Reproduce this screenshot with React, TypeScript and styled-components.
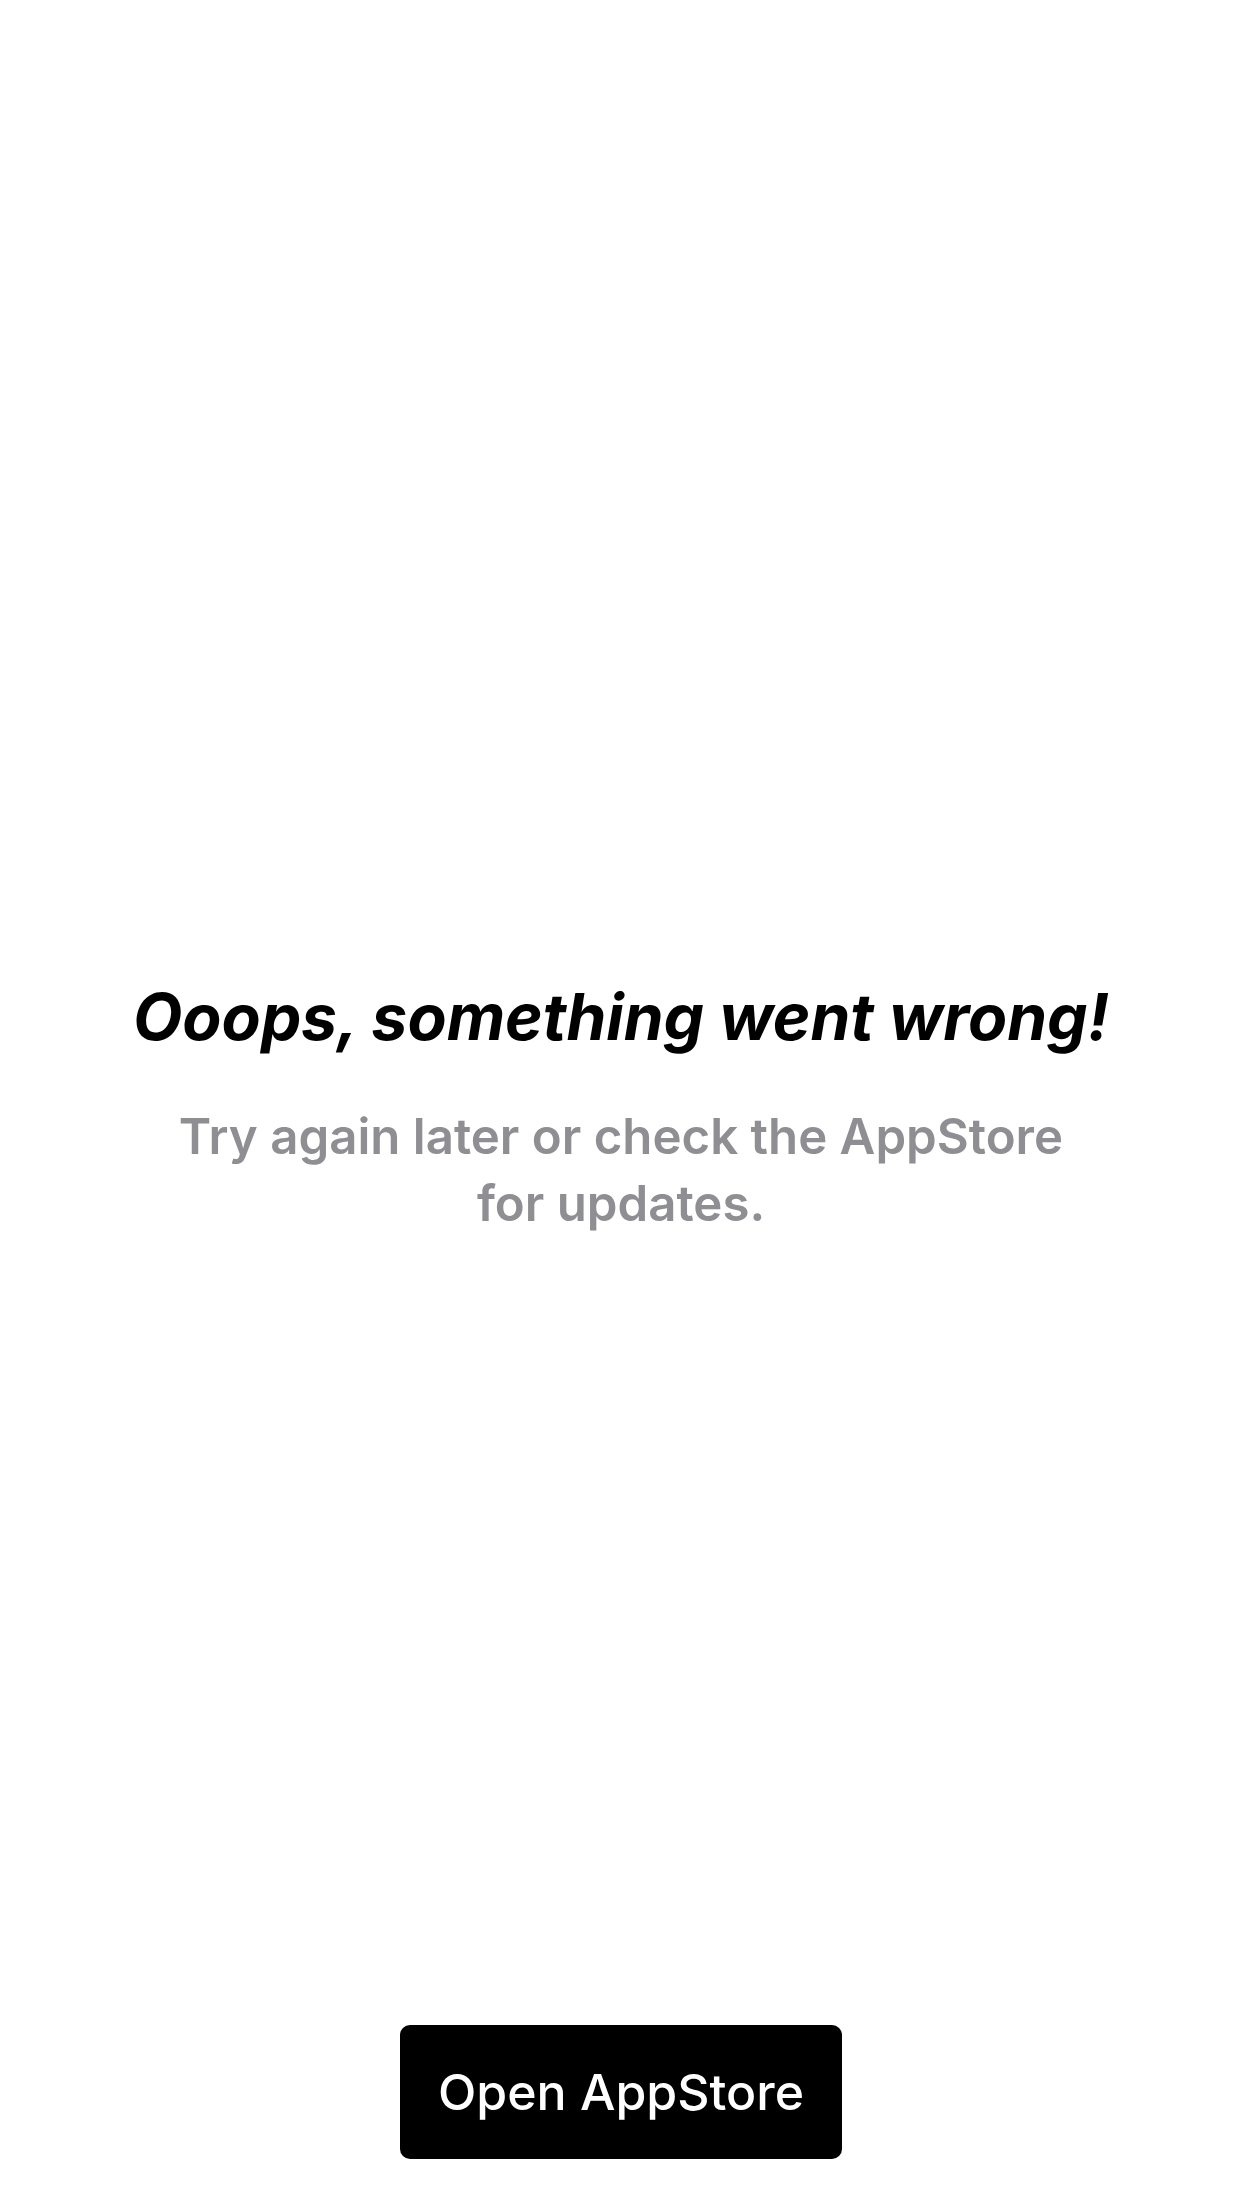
import React from "react";
import styled, { createGlobalStyle } from "styled-components";

const GlobalStyle = createGlobalStyle`
  html, body {
    margin: 0;
    padding: 0;
    background: #ffffff;
  }
  body {
    font-family: Inter, "Noto Sans", "Liberation Sans", sans-serif;
    -webkit-font-smoothing: antialiased;
  }
`;

const Screen = styled.main`
  width: 1242px;
  height: 2208px;
  display: grid;
  grid-template-rows: 1fr auto 1fr;
  justify-items: center;
  background: #ffffff;
  box-sizing: border-box;
`;

const Content = styled.section`
  display: flex;
  flex-direction: column;
  align-items: center;
  text-align: center;
  gap: 49px;
  padding-top: 8px;
`;

const Title = styled.h1`
  margin: 0;
  font-family: Inter, "Noto Sans", sans-serif;
  font-size: 64px;
  line-height: 74px;
  font-weight: 700;
  font-style: italic;
  color: #000000;
  letter-spacing: 0;
`;

const Message = styled.p`
  margin: 0;
  max-width: 920px;
  font-family: Inter, "Noto Sans", sans-serif;
  font-size: 49.2px;
  line-height: 67px;
  font-weight: 600;
  color: #8e8e93;
`;

const Footer = styled.footer`
  align-self: end;
  display: flex;
  justify-content: center;
  padding-bottom: 49px;
`;

const StoreButton = styled.button`
  height: 134px;
  padding: 0 38px;
  border: none;
  border-radius: 10px;
  background: #000000;
  color: #ffffff;
  font-family: Inter, "Noto Sans", sans-serif;
  font-size: 50px;
  font-weight: 500;
  cursor: pointer;
`;

export default function App() {
  return (
    <>
      <GlobalStyle />
      <Screen>
        <div />
        <Content>
          <Title>Ooops, something went wrong!</Title>
          <Message>Try again later or check the AppStore for updates.</Message>
        </Content>
        <Footer>
          <StoreButton>Open AppStore</StoreButton>
        </Footer>
      </Screen>
    </>
  );
}
